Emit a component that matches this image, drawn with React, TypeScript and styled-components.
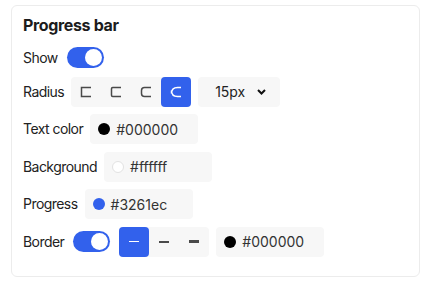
import React from "react";
import styled, { createGlobalStyle } from "styled-components";

const Global = createGlobalStyle`
  html, body { margin: 0; padding: 0; background: #ffffff; }
  body { font-family: Inter, "Noto Sans", sans-serif; color: #222; }
`;

const Page = styled.div`
  padding: 5px 11px;
`;

const Card = styled.section`
  box-sizing: border-box;
  width: 409px;
  border: 1px solid #ececec;
  border-radius: 6px;
  padding: 9px 11px 19px 11px;
  display: flex;
  flex-direction: column;
`;

const Title = styled.h2`
  margin: 0 0 11px 0;
  font-size: 16px;
  letter-spacing: -0.35px;
  line-height: 20px;
  font-weight: 700;
  color: #1c1c1c;
`;

const Rows = styled.div`
  display: flex;
  flex-direction: column;
  gap: 7.5px;
`;

const Row = styled.div<{ $h?: number }>`
  display: flex;
  align-items: center;
  gap: 7px;
  height: ${(p) => p.$h ?? 30}px;
`;

const Label = styled.span`
  font-size: 14px;
  letter-spacing: -0.55px;
  line-height: 20px;
  color: #222;
  white-space: nowrap;
`;

const Toggle = styled.span<{ $on: boolean }>`
  box-sizing: border-box;
  width: 37px;
  height: 21px;
  margin: 0 2px;
  border-radius: 11px;
  background: ${(p) => (p.$on ? "#3261ec" : "#ccc")};
  padding: 2px;
  display: flex;
  justify-content: ${(p) => (p.$on ? "flex-end" : "flex-start")};
  align-items: center;
`;

const Knob = styled.span`
  width: 17px;
  height: 17px;
  border-radius: 50%;
  background: #fff;
`;

const Segmented = styled.div`
  display: flex;
  background: #f7f7f7;
  border-radius: 4px;
  height: 30px;
`;

const SegButton = styled.button<{ $active?: boolean }>`
  width: 30px;
  height: 30px;
  border: 0;
  padding: 0;
  border-radius: 4px;
  background: ${(p) => (p.$active ? "#3261ec" : "transparent")};
  color: ${(p) => (p.$active ? "#ffffff" : "#4a4a4a")};
  display: flex;
  align-items: center;
  justify-content: center;
  cursor: pointer;
`;

const Select = styled.div`
  box-sizing: border-box;
  width: 82px;
  height: 30px;
  background: #f7f7f7;
  border-radius: 4px;
  display: flex;
  align-items: center;
  padding-left: 17px;
  gap: 12px;
  font-size: 14px;
  color: #222;
`;

const ColorInput = styled.div`
  box-sizing: border-box;
  width: 108px;
  height: 30px;
  background: #f7f7f7;
  border-radius: 4px;
  display: flex;
  align-items: center;
  padding-left: 8px;
  gap: 6px;
  font-size: 14px;
  color: #333;
`;

const Swatch = styled.span<{ $c: string }>`
  box-sizing: border-box;
  width: 12px;
  height: 12px;
  border-radius: 50%;
  background: ${(p) => p.$c};
  border: ${(p) => (p.$c === "#ffffff" ? "1px solid #e2e2e2" : "none")};
`;

const Line = styled.span<{ $w: number }>`
  width: 10px;
  height: ${(p) => p.$w}px;
  background: currentColor;
`;

const RadiusIcon = ({ r }: { r: number }) => (
  <svg width="12" height="12" viewBox="0 0 12 12" fill="none">
    <path
      d={`M11 1.5 H${1.5 + r} ${r ? `Q1.5 1.5 1.5 ${1.5 + r}` : ""} V${10.5 - r} ${
        r ? `Q1.5 10.5 ${1.5 + r} 10.5` : ""
      } H11`}
      stroke="currentColor"
      strokeWidth="1.5"
    />
  </svg>
);

const Chevron = () => (
  <svg width="9" height="6" viewBox="0 0 9 6" fill="none">
    <path d="M1 1 L4.5 4.5 L8 1" stroke="#111" strokeWidth="2" />
  </svg>
);

const Switch = ({ on }: { on: boolean }) => (
  <Toggle $on={on}>
    <Knob />
  </Toggle>
);

const Color = ({ c }: { c: string }) => (
  <ColorInput>
    <Swatch $c={c} />
    <span>{c}</span>
  </ColorInput>
);

export default function App() {
  return (
    <Page>
      <Global />
      <Card>
        <Title>Progress bar</Title>
        <Rows>
          <Row $h={23}>
            <Label>Show</Label>
            <Switch on />
          </Row>
          <Row>
            <Label>Radius</Label>
            <Segmented>
              {[0, 1.2, 3, 6].map((r, i) => (
                <SegButton key={i} $active={i === 3}>
                  <RadiusIcon r={r} />
                </SegButton>
              ))}
            </Segmented>
            <Select>
              <span>15px</span>
              <Chevron />
            </Select>
          </Row>
          <Row>
            <Label>Text color</Label>
            <Color c="#000000" />
          </Row>
          <Row>
            <Label>Background</Label>
            <Color c="#ffffff" />
          </Row>
          <Row>
            <Label>Progress</Label>
            <Color c="#3261ec" />
          </Row>
          <Row>
            <Label>Border</Label>
            <Switch on />
            <Segmented>
              {[1, 2, 3].map((w, i) => (
                <SegButton key={i} $active={i === 0}>
                  <Line $w={w} />
                </SegButton>
              ))}
            </Segmented>
            <Color c="#000000" />
          </Row>
        </Rows>
      </Card>
    </Page>
  );
}
